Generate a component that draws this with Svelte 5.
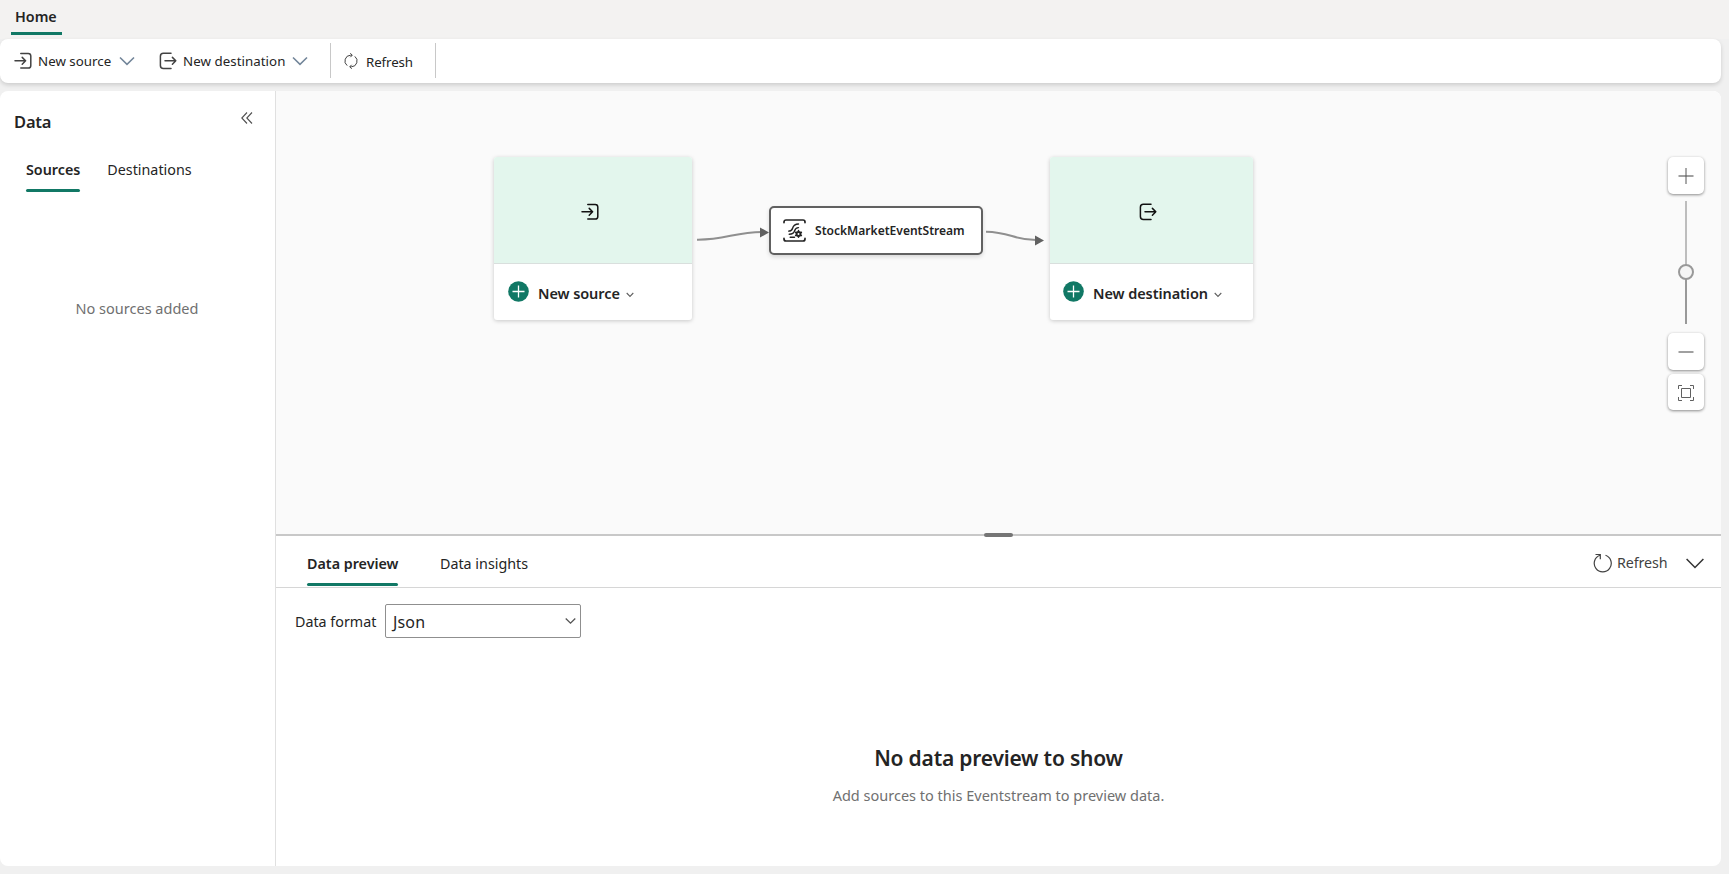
<script>
  const options = ['Json', 'Csv', 'Avro'];
  const format = options[0];
</script>

{#snippet enter(size, color, sw)}
  <svg width={size} height={size} viewBox="0 0 18 18" fill="none" stroke={color} stroke-width={sw} stroke-linecap="round" stroke-linejoin="round">
    <path d="M6.8 1.5H14.2a2.600 2.600 0 0 1 2.600 2.600v9.300a2.600 2.600 0 0 1-2.600 2.600H6.8M1 8.800h10.600M8.200 5.400 11.600 8.800l-3.400 3.400" />
  </svg>
{/snippet}

{#snippet leave(size, color, sw)}
  <svg width={size} height={size} viewBox="0 0 18 18" fill="none" stroke={color} stroke-width={sw} stroke-linecap="round" stroke-linejoin="round">
    <path d="M12 1.200H4.400a3 3 0 0 0-3 3v9.200a3 3 0 0 0 3 3H12M6 8.800h10.800M13.400 5.400 16.800 8.800l-3.400 3.400" />
  </svg>
{/snippet}

{#snippet plusDisc()}
  <svg width="21" height="21" viewBox="0 0 21 21">
    <circle cx="10.5" cy="10.5" r="10.3" fill="#117865" />
    <path d="M10.5 4.5v12M4.5 10.5h12" stroke="#fff" stroke-width="1.3" />
  </svg>
{/snippet}

{#snippet smallChevron()}
  <svg width="8" height="6" viewBox="0 0 8 6" fill="none" stroke="#616161" stroke-width="1.1"><path d="M.7 1 4 4.4 7.3 1" /></svg>
{/snippet}

<div class="app">
  <header><span class="home">Home</span></header>

  <div class="toolbar">
    <button class="cmd source">
      {@render enter(18, '#424242', 1.5)}
      <span class="t-source">New source</span>
      <svg width="16" height="10" viewBox="0 0 16 10" fill="none" stroke="#73869a" stroke-width="1.6"><path d="M1 1.500 8 8.300 15 1.500" /></svg>
    </button>
    <button class="cmd dest">
      {@render leave(18, '#424242', 1.5)}
      <span class="t-dest">New destination</span>
      <svg width="16" height="10" viewBox="0 0 16 10" fill="none" stroke="#73869a" stroke-width="1.6"><path d="M1 1.500 8 8.300 15 1.500" /></svg>
    </button>
    <button class="cmd refresh">
      <svg width="14" height="16" viewBox="0 0 14 16" fill="none" stroke="#424242" stroke-width="1">
        <path d="M8 2.200H6.600A5.800 5.800 0 0 0 3.200 12.600M6 13.800h1.400A5.800 5.800 0 0 0 10.800 3.400" />
        <path d="M6.300.2 8.300 2.200 6.300 4.200M7.700 11.800 5.700 13.800 7.700 15.800" />
      </svg>
      <span class="t-refresh">Refresh</span>
    </button>
  </div>

  <main>
    <aside>
      <div class="title">
        <h2>Data</h2>
        <svg width="12" height="12" viewBox="0 0 12 12" fill="none" stroke="#505050" stroke-width="1.1"><path d="M6 .5.8 6 6 11.500M11 .5 5.800 6 11 11.500" /></svg>
      </div>
      <nav class="side-tabs">
        <span class="tab active">Sources</span>
        <span class="tab t-destinations">Destinations</span>
      </nav>
      <p class="empty">No sources added</p>
    </aside>

    <section class="work">
      <div class="canvas">
        <svg class="edges" width="1445" height="443" viewBox="276 91 1445 443" fill="none" stroke="#8f8f8f" stroke-width="2">
          <path d="M697 239.700C725 240 735 232 762 232" />
          <path d="M986 231.700C1010 232 1014 240 1036 240" />
          <path d="M760 227.500 769 232.500 760 237.500ZM1035 235.500 1044 240.500 1035 245.500Z" fill="#616161" stroke="none" />
        </svg>

        <div class="card in">
          <div class="hero">{@render enter(18, '#111', 1.5)}</div>
          <div class="action">{@render plusDisc()}<span class="c-source">New source</span>{@render smallChevron()}</div>
        </div>

        <div class="stream">
          <svg width="23" height="23" viewBox="0 0 23 23" fill="none" stroke="#242424" stroke-width="1.7" stroke-linecap="round">
            <path d="M1 3.600V3A2 2 0 0 1 3 1h17a2 2 0 0 1 2 2v.6M1 19.400V20a2 2 0 0 0 2 2h17a2 2 0 0 0 2-2v-.6" />
            <path d="M15.500 5C11 5 10.200 7 9.600 9.200 9 11.400 8 12.100 5.600 12.100M15.500 8.600C12.500 8.600 12 10.300 11.500 12 10.900 14.200 9.800 15.200 6.200 15.200M7.200 18.300h4.300" stroke-width="1.400" />
            <circle cx="15.500" cy="14.900" r="2" stroke-width="2" />
            <path d="M15.500 11.600v6.600M12.600 13.250l5.800 3.300M18.400 13.250l-5.800 3.300" stroke-width="1.500" />
            <circle cx="15.500" cy="14.900" r="1" fill="#fff" stroke="none" />
          </svg>
          <span>StockMarketEventStream</span>
        </div>

        <div class="card out">
          <div class="hero">{@render leave(18, '#111', 1.5)}</div>
          <div class="action">{@render plusDisc()}<span class="c-dest">New destination</span>{@render smallChevron()}</div>
        </div>

        <div class="zoom">
          <button class="zb"><svg width="16" height="16" viewBox="0 0 16 16"><path d="M.5 8h15" stroke="#a0a0a0" stroke-width="2" /><path d="M8 0v16" stroke="#555" stroke-width="1" /></svg></button>
          <svg class="slider" width="36" height="123" viewBox="0 0 36 123">
            <path d="M18 0v65" stroke="#bdbdbd" stroke-width="2" />
            <path d="M18 77v46" stroke="#999" stroke-width="2" />
            <circle cx="18" cy="71" r="7" fill="#f5f5f5" stroke="#999" stroke-width="2" />
          </svg>
          <button class="zb"><svg width="16" height="16" viewBox="0 0 16 16"><path d="M.5 8h15" stroke="#a0a0a0" stroke-width="2" /></svg></button>
          <button class="zb fit"><svg width="16" height="16" viewBox="0 0 16 16" fill="none" stroke="#616161"><path d="M.5 4V.5H4M12 .5h3.500V4M15.500 12v3.500H12M4 15.500H.5V12M3.500 3.500h9v9h-9z" /></svg></button>
        </div>
      </div>

      <div class="splitter"><i></i></div>

      <div class="bottom-bar">
        <span class="tab active t-preview">Data preview</span>
        <span class="tab t-insights">Data insights</span>
        <div class="right">
          <svg width="20" height="20" viewBox="0 0 20 20" fill="none" stroke="#424242" stroke-width="1.200"><path d="M12.500 2.300A8.500 8.500 0 1 1 7 2.300M2.500 1.500H7.300V6.300" /></svg>
          <span class="b-refresh">Refresh</span>
          <svg width="18" height="11" viewBox="0 0 18 11" fill="none" stroke="#333" stroke-width="1.500"><path d="M.6 1 9 9.500 17.400 1" /></svg>
        </div>
      </div>

      <div class="format">
        <span class="f-label">Data format</span>
        <div class="select"><span>{format}</span><svg width="11" height="8" viewBox="0 0 12 8" fill="none" stroke="#555" stroke-width="1.400"><path d="M.8 1.200 6 6.400 11.200 1.200" /></svg></div>
      </div>

      <div class="nothing">
        <h3>No data preview to show</h3>
        <p>Add sources to this Eventstream to preview data.</p>
      </div>
    </section>
  </main>
</div>

<style>
  :global(body) { margin: 0; background: #f0f0f0; }
  .app {
    height: 874px; width: 1729px; overflow: hidden; box-sizing: border-box;
    display: flex; flex-direction: column;
    font-family: 'Noto Sans', 'Open Sans', sans-serif; font-size: 14.300px; color: #242424; white-space: nowrap;
  }
  svg { display: block; flex: none; }
  h2, h3, p { margin: 0; }
  button { border: 0; background: none; padding: 0; font: inherit; color: inherit; }
  header { height: 39px; background: #f3f2f1; padding-left: 11px; flex: none; }
  .home {
    display: block; box-sizing: border-box; width: 51px; height: 35px; padding-left: 4px;
    border-bottom: 3px solid #117865; font-weight: 600; line-height: 34px; font-size: 14.300px;
  }
  .toolbar {
    height: 44px; width: 1721px; flex: none; border-radius: 8px; background: #fff; display: flex; align-items: center;
    box-shadow: 0 2px 4px rgba(0, 0, 0, .15); padding-left: 14px; box-sizing: border-box; font-size: 13.300px;
  }
  .cmd { display: flex; align-items: center; height: 44px; flex: none; box-sizing: border-box; text-align: left; }
  .cmd span { display: block; }
  .t-source { width: 81px; margin-left: 6px; }
  .source { width: 145px; }
  .source .t-source { letter-spacing: .02px; }
  .dest { width: 171px; }
  .t-dest { width: 109px; margin-left: 6px; letter-spacing: .05px; }
  .refresh { border: solid #c8c8c8; border-width: 0 1px; height: 35px; width: 106px; padding-left: 13px; margin-top: -1px; }
  .t-refresh { margin: 2px 0 0 8px; letter-spacing: -.1px; }
  main { margin-top: 8px; height: 775px; width: 1721px; display: flex; border-radius: 8px; overflow: hidden; background: #fff; }
  aside { width: 275px; border-right: 1px solid #e0e0e0; flex: none; }
  .title { display: flex; justify-content: space-between; padding: 18px 22px 0 14px; height: 44px; }
  .title h2 { font-size: 16.500px; font-weight: 600; line-height: 25px; letter-spacing: -.2px; }
  .title svg { margin-top: 3px; }
  .side-tabs { display: flex; padding-left: 26px; gap: 27px; height: 39px; }
  .tab { display: block; box-sizing: border-box; position: relative; line-height: 33px; font-size: 14.300px; }
  .active { font-weight: 600; }
  .active::after { content: ''; position: absolute; left: 0; right: 0; bottom: 0; height: 3px; border-radius: 2px; background: #117865; }
  .side-tabs .tab { height: 39px; }
  .empty { text-align: center; color: #707070; margin-top: 105px; line-height: 22px; font-size: 14.500px; padding-right: 1px; }
  .work { width: 1445px; display: flex; flex-direction: column; }
  .canvas { height: 443px; flex: none; background: #fafafa; position: relative; }
  .edges { position: absolute; left: 0; top: 0; }
  .card { position: absolute; top: 66px; height: 163px; background: #fff; border-radius: 3px; box-shadow: 0 1px 4px rgba(0, 0, 0, .2); overflow: hidden; }
  .in { left: 218px; width: 198px; }
  .out { left: 774px; width: 203px; }
  .hero { height: 106px; border-bottom: 1px solid #d9dfdd; background: #e3f6ed; display: flex; align-items: center; justify-content: center; }
  .hero svg { margin: 3px 6px 0 0; }
  .out .hero svg { margin-right: 8px; }
  .action { display: flex; align-items: center; height: 56px; padding-left: 14px; font-weight: 600; font-size: 14.500px; letter-spacing: -.08px; }
  .out .action { padding-left: 13px; }
  .action svg:first-child { margin-top: -1px; }
  .action span { margin: 2px 0 0 9px; }
  .action svg:last-child { margin-top: 5px; }
  .c-source { width: 88px; }
  .c-dest { width: 121px; }
  .stream {
    position: absolute; left: 493px; top: 115px; width: 214px; height: 49px; box-sizing: border-box; background: #fff;
    border: 2px solid #616161; border-radius: 5px; display: flex; align-items: center; padding-left: 12px; gap: 9px;
    font-size: 12.050px; font-weight: 600; box-shadow: 0 2px 4px rgba(0, 0, 0, .14);
  }
  .zoom { position: absolute; left: 1392px; top: 66px; width: 36px; display: flex; flex-direction: column; }
  .zb { box-sizing: border-box; height: 37px; width: 36px; background: #fff; border-radius: 5px; box-shadow: 0 1px 3px rgba(0, 0, 0, .45); display: flex; align-items: center; justify-content: center; padding: 1px 0 0; }
  .slider { margin: 7px 0 9px; }
  .zb.fit { margin-top: 4px; height: 36px; }
  .splitter { height: 2px; background: #c8c8c8; position: relative; flex: none; }
  .splitter i { position: absolute; left: 708px; top: -1px; width: 29px; height: 4px; border-radius: 2px; background: #757575; }
  .bottom-bar { height: 51px; border-bottom: 1px solid #d6d6d6; display: flex; padding-left: 31px; flex: none; }
  .bottom-bar .tab { height: 50px; line-height: 56px; }
  .t-preview { width: 91px; }
  .t-insights { margin-left: 42px; }
  .right { margin-left: auto; display: flex; align-items: center; padding: 3px 17px 0 0; height: 48px; }
  .right svg:first-child { margin-top: -1px; }
  .b-refresh { width: 69px; margin: -2px 0 0 4px; color: #424242; letter-spacing: -.1px; }
  .format { display: flex; padding: 16px 0 0 19px; align-items: center; }
  .f-label { width: 90px; }
  .select { box-sizing: border-box; width: 196px; height: 34px; border: 1px solid #8f8f8f; border-radius: 2px; display: flex; align-items: center; justify-content: space-between; padding: 0 4px 0 7px; font-size: 16px; }
  .select span { margin-top: 1px; letter-spacing: .15px; }
  .nothing { text-align: center; margin-top: 103px; }
  .nothing h3 { font-size: 21px; font-weight: 600; line-height: 34px; letter-spacing: -.2px; }
  .nothing p { color: #707070; font-size: 14.500px; margin-top: 9px; line-height: 22px; }
</style>
